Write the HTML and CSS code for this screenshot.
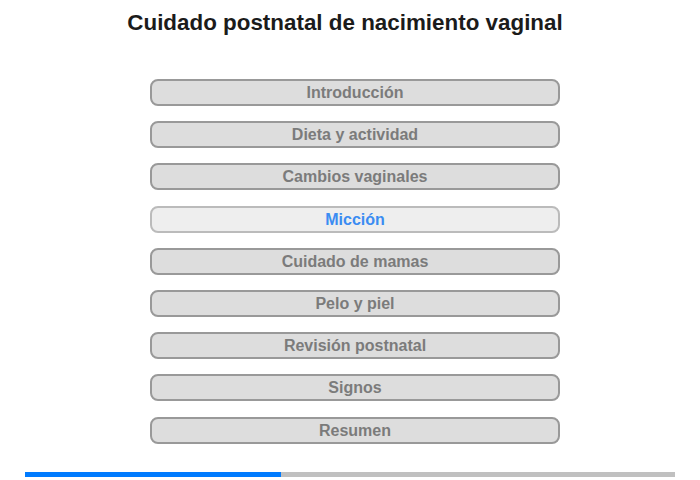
FILE: index.html
```html
<!DOCTYPE html>
<html lang="es">
<head>
<meta charset="utf-8">
<title>Cuidado postnatal de nacimiento vaginal</title>
<link rel="stylesheet" href="styles.css">
</head>
<body>
<div class="page">
  <h1 class="title">Cuidado postnatal de nacimiento vaginal</h1>
  <nav class="menu">
    <button class="item">Introducción</button>
    <button class="item">Dieta y actividad</button>
    <button class="item">Cambios vaginales</button>
    <button class="item active">Micción</button>
    <button class="item">Cuidado de mamas</button>
    <button class="item">Pelo y piel</button>
    <button class="item">Revisión postnatal</button>
    <button class="item">Signos</button>
    <button class="item">Resumen</button>
  </nav>
  <div class="progress"><div class="progress-fill" style="width:256px"></div></div>
</div>
</body>
</html>
```
FILE: styles.css
```css
html, body {
  margin: 0;
  padding: 0;
  background: #fff;
}
body {
  font-family: "Liberation Sans", Arial, sans-serif;
}
.page {
  width: 700px;
  height: 480px;
  overflow: hidden;
}
.title {
  margin: 0;
  padding-top: 10px;
  width: 690px;
  text-align: center;
  font-size: 22.4px;
  line-height: 26px;
  font-weight: bold;
  color: #1b1b1b;
}
.menu {
  margin-top: 43px;
  padding-left: 150px;
  display: flex;
  flex-direction: column;
  gap: 15.2px;
}
.item {
  box-sizing: border-box;
  width: 410px;
  height: 27px;
  margin: 0;
  padding: 0;
  border: 2px solid #999;
  border-radius: 8px;
  background: #ddd;
  color: #7b7b7b;
  font-family: "Liberation Sans", Arial, sans-serif;
  font-size: 16px;
  font-weight: bold;
  line-height: 23px;
  text-align: center;
}
.item.active {
  background: #eee;
  border-color: #bbb;
  color: #3b8cf2;
}
.progress {
  margin: 28.4px 0 0 25px;
  width: 650px;
  height: 5px;
  background: #c0c0c0;
}
.progress-fill {
  height: 100%;
  background: #007bff;
}
```
